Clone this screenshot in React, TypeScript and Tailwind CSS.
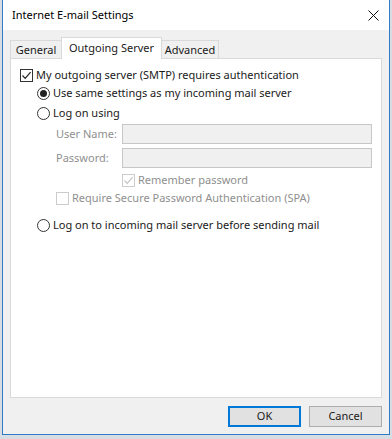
import React from "react";

const FONT = { fontFamily: '"Noto Sans", "Open Sans", sans-serif' };

function CheckBox({ checked, disabled }: { checked?: boolean; disabled?: boolean }) {
  return (
    <span
      className={`flex h-[13px] w-[13px] shrink-0 items-center justify-center border bg-white ${
        disabled ? "border-[#cccccc]" : "border-[#333333]"
      }`}
    >
      {checked && (
        <svg width="11" height="11" viewBox="0 0 11 11">
          <path
            d="M1.5 5.5 L4.2 8.3 L9.6 2.2"
            fill="none"
            stroke={disabled ? "#c4c4c4" : "#222222"}
            strokeWidth="1.2"
          />
        </svg>
      )}
    </span>
  );
}

function Radio({ checked }: { checked?: boolean }) {
  return (
    <span className="flex h-[13px] w-[13px] shrink-0 items-center justify-center rounded-full border border-[#333333] bg-white">
      {checked && <span className="h-[7px] w-[7px] rounded-full bg-[#222222]" />}
    </span>
  );
}

function Field({ label }: { label: string }) {
  return (
    <div className="flex h-[20px] items-center pl-[45px]">
      <span className="w-[66px] whitespace-nowrap text-[#8f8f8f]">{label}</span>
      <div className="h-[20px] w-[250px] border border-[#c7c7c7] bg-[#f0f0f0]" />
    </div>
  );
}

export default function App() {
  return (
    <div className="h-[439px] w-[392px] overflow-hidden bg-[#d8dde3] text-[11px] text-[#1a1a1a]" style={FONT}>
      {/* window */}
      <div className="ml-[2px] flex h-[435px] w-[388px] flex-col border-x border-b border-[#2f7bc8]">
        {/* title bar */}
        <div className="flex h-[30px] items-center justify-between bg-white pl-[9px] pr-[10px]">
          <span className="text-[11px] text-black">Internet E-mail Settings</span>
          <svg width="11" height="11" viewBox="0 0 11 11">
            <path d="M0.5 0.5 L10.5 10.5 M10.5 0.5 L0.5 10.5" stroke="#111111" strokeWidth="1" />
          </svg>
        </div>

        {/* body */}
        <div className="flex flex-1 flex-col bg-[#f0f0f0] px-[7px] pt-[7px]">
          {/* tabs */}
          <div className="flex h-[21px] items-end">
            <div className="flex h-[18px] w-[51px] items-center justify-center border-l border-t border-[#d9d9d9] bg-[#f0f0f0] pt-[1px]">
              General
            </div>
            <div className="relative z-10 -mb-px flex h-[22px] w-[101px] items-start justify-center border-x border-t border-[#d9d9d9] bg-white pt-[2px]">
              Outgoing Server
            </div>
            <div className="flex h-[18px] w-[57px] items-center justify-center border-r border-t border-[#d9d9d9] bg-[#f0f0f0] pt-[1px]">
              Advanced
            </div>
          </div>

          {/* panel */}
          <div className="flex h-[340px] flex-col border border-[#d9d9d9] bg-white pt-[7px]">
            <div className="flex h-[18px] items-center gap-[3px] pl-[9px]">
              <CheckBox checked />
              <span>My outgoing server (SMTP) requires authentication</span>
            </div>
            <div className="flex h-[18px] items-center gap-[3px] pl-[26px]">
              <Radio checked />
              <span>Use same settings as my incoming mail server</span>
            </div>
            <div className="mt-[2px] flex h-[18px] items-center gap-[3px] pl-[26px]">
              <Radio />
              <span>Log on using</span>
            </div>
            <div className="mt-[2px]">
              <Field label="User Name:" />
            </div>
            <div className="mt-[4px]">
              <Field label="Password:" />
            </div>
            <div className="mt-[3px] flex h-[18px] items-center gap-[3px] pl-[111px] text-[#8f8f8f]">
              <CheckBox checked disabled />
              <span>Remember password</span>
            </div>
            <div className="flex h-[18px] items-center gap-[3px] pl-[45px] text-[#8f8f8f]">
              <CheckBox disabled />
              <span>Require Secure Password Authentication (SPA)</span>
            </div>
            <div className="mt-[9px] flex h-[18px] items-center gap-[3px] pl-[26px]">
              <Radio />
              <span>Log on to incoming mail server before sending mail</span>
            </div>
          </div>

          {/* buttons */}
          <div className="mt-[8px] flex justify-end gap-[8px]">
            <button className="flex h-[21px] w-[73px] items-center justify-center border-2 border-[#0078d7] bg-[#e1e1e1]">
              OK
            </button>
            <button className="flex h-[21px] w-[73px] items-center justify-center border border-[#adadad] bg-[#e1e1e1]">
              Cancel
            </button>
          </div>
        </div>
      </div>
    </div>
  );
}
